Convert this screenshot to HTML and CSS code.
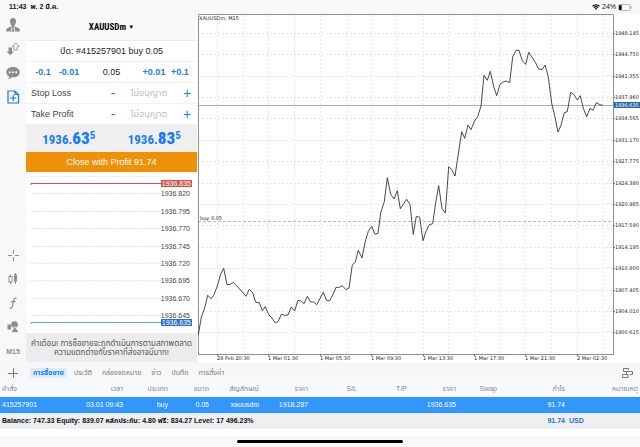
FILE: index.html
```html
<!DOCTYPE html>
<html lang="th">
<head>
<meta charset="utf-8">
<meta name="viewport" content="width=device-width, initial-scale=1">
<title>XAUUSDm, M15</title>
<link rel="stylesheet" href="styles.css">
</head>
<body>
<header class="status">
  <span class="clock">11:43</span><span>พ. 2 มี.ค.</span>
  <span class="status-right">
    <svg width="8" height="6" viewBox="0 0 16 12" aria-hidden="true"><path d="M1 4.500a10 10 0 0 1 14 0M3.600 7.200a6.300 6.300 0 0 1 8.800 0" fill="none" stroke="#111" stroke-width="2.400"/><path d="M5.400 9 8 12l2.600-3a4 4 0 0 0-5.200 0z" fill="#111"/></svg>
    <span>24%</span>
    <svg width="14" height="7" viewBox="0 0 14 7" aria-hidden="true"><rect x=".5" y=".5" width="11.500" height="6" rx="1.500" fill="#fff" stroke="#999" stroke-width=".7"/><rect x="1" y="1" width="2.700" height="5" rx=".8" fill="#111"/><path d="M13 2.300v2.400" stroke="#999"/></svg>
  </span>
</header>

<main class="work">
  <nav class="tools">
    <button aria-label="Account"><svg width="14" height="14" viewBox="0 0 14 14" fill="#8d8d8d"><path d="M7 0C4.800 0 3.800 1.500 4 3.600c.1 1.700.8 3 1.600 3.800v1.200L1.500 10Q.2 10.600.2 12v1.600h13.600V12q0-1.400-1.300-2L8.400 8.600V7.400c.8-.8 1.500-2.100 1.600-3.800C10.200 1.500 9.200 0 7 0z"/><path d="m5.400 9 1.600 1.200L8.600 9l.7 4.600H4.700z" fill="#e4e4e4"/><path d="m6.300 10.400h1.400l.5 3.200H5.800z"/></svg></button>
    <button aria-label="Quotes"><svg width="14" height="14" viewBox="0 0 14 14"><path d="M2.500 5.500h3.500v4h2L4.300 13.300.5 9.500h2z" fill="#8d8d8d"/><path d="M9.700.8 13 4.500h-1.700V8H8V4.500H6.400z" fill="#f8f8f8" stroke="#8d8d8d" stroke-width=".8"/></svg></button>
    <button aria-label="Chat"><svg width="14" height="14" viewBox="0 0 14 14"><path d="M7 1C3 1 .3 3.200.3 6.200c0 2 1.200 3.600 3 4.400-.2 1-.8 1.900-1.500 2.500 1.700-.1 3-.8 4-1.900H7c4 0 6.700-2 6.700-5S11 1 7 1z" fill="#8d8d8d"/><g fill="#f8f8f8"><circle cx="3.800" cy="6.200" r="1"/><circle cx="7" cy="6.200" r="1"/><circle cx="10.200" cy="6.200" r="1"/></g></svg></button>
    <button aria-label="New order"><svg width="14" height="14" viewBox="0 0 14 14" fill="none" stroke="#1678e6" stroke-width="1.200"><path d="M2 1h7l3.500 3.500V13H2zM9 1v3.500h3.500M7.200 5v6M4.200 8h6"/></svg></button>
    <span class="tools-gap"></span>
    <button aria-label="Crosshair"><svg width="14" height="14" viewBox="0 0 14 14" stroke="#8d8d8d"><path d="M7.500 2v4M7.500 9v4M2 7.500h4M9 7.500h4"/></svg></button>
    <button aria-label="Chart type"><svg width="14" height="14" viewBox="0 0 14 14" stroke="#8d8d8d"><path d="M4.500 2.500v2M4.500 10v2M9.500 1v11" /><rect x="3" y="4.500" width="3" height="5.500" fill="none"/><rect x="8.500" y="3" width="2" height="6" fill="#8d8d8d"/></svg></button>
    <button aria-label="Indicators"><svg width="14" height="14" viewBox="0 0 14 14" fill="none" stroke="#8d8d8d" stroke-width="1.200"><path d="M10.500 2.600C9 1.400 8.200 2.400 7.800 4L6.300 10.500C5.900 12 5 12.600 3.600 11.800M5 5.600h4.600"/></svg></button>
    <button aria-label="Objects"><svg width="14" height="14" viewBox="0 0 14 14" fill="#8d8d8d"><circle cx="8.500" cy="4.500" r="3.300"/><path d="M1.500 4.500h3.600v5H1.500z"/><path d="m8.800 6.500 4.200 6H5z" stroke="#f8f8f8" stroke-width=".7"/></svg></button>
    <button class="timeframe">M15</button>
  </nav>

  <section class="order">
    <h1>XAUUSDm <span class="caret">▼</span></h1>
    <div class="row title">ปิด: #415257901 buy 0.05</div>
    <div class="row volume">
      <button>-0.1</button><button>-0.01</button>
      <input aria-label="Volume" value="0.05">
      <button>+0.01</button><button>+0.1</button>
    </div>
    <div class="row level">
      <label for="sl">Stop Loss</label><button aria-label="Decrease stop loss">-</button>
      <input id="sl" placeholder="ไม่อนุญาต"><button aria-label="Increase stop loss">+</button>
    </div>
    <div class="row level">
      <label for="tp">Take Profit</label><button aria-label="Decrease take profit">-</button>
      <input id="tp" placeholder="ไม่อนุญาต"><button aria-label="Increase take profit">+</button>
    </div>
    <div class="prices">
      <div class="price">1936.<b>63</b><sup>5</sup></div>
      <div class="price">1936.<b>83</b><sup>5</sup></div>
    </div>
    <button class="close">Close with Profit 91.74</button>
    <svg class="depth" viewBox="0 0 171 161">
      <path class="depth-grid" d="M5 4.500H135M5 21.500H135M5 39.500H135M5 56.500H135M5 74.500H135M5 91.500H135M5 108.500H135M5 126.500H135M5 143.500H135"/>
      <path d="M5 13v-1.500H135" fill="none" stroke="#d0524a"/>
      <path d="M5 152v-1.500H135" fill="none" stroke="#6b9fdc"/>
      <g class="depth-label">
        <text x="164" y="24">1936.820</text><text x="164" y="42">1936.795</text><text x="164" y="59">1936.770</text><text x="164" y="77">1936.745</text><text x="164" y="94">1936.720</text><text x="164" y="111">1936.695</text><text x="164" y="129">1936.670</text><text x="164" y="146">1936.645</text>
      </g>
      <rect x="135" y="8" width="31" height="7" fill="#d0524a"/><rect x="135" y="147" width="31" height="7" fill="#2c70c9"/>
      <g class="depth-label on"><text x="165" y="14">1936.835</text><text x="165" y="153">1936.635</text></g>
    </svg>
    <p class="warning">คำเตือน! การซื้อขายจะถูกดำเนินการตามสภาพตลาด ความแตกต่างกับราคาที่ส่งอาจมีมาก!</p>
  </section>

  <section class="chart">
    <svg viewBox="197 14 443 348" role="img" aria-label="XAUUSDm M15">
      <path class="grid" d="M198 33.500H613M198 54.500H613M198 76.500H613M198 97.500H613M198 118.500H613M198 140.500H613M198 161.500H613M198 183.500H613M198 204.500H613M198 225.500H613M198 247.500H613M198 268.500H613M198 290.500H613M198 311.500H613M198 332.500H613"/>
      <path class="grid" d="M217.500 15V354M243.500 15V354M268.500 15V354M294.500 15V354M320.500 15V354M346.500 15V354M371.500 15V354M397.500 15V354M423.500 15V354M448.500 15V354M474.500 15V354M500.500 15V354M525.500 15V354M551.500 15V354M577.500 15V354M602.500 15V354"/>
      <path d="M198 105.500H613" stroke="#9bb5cb"/>
      <path d="M198 221.500H613" stroke="#a3c9b0" stroke-dasharray="3 2"/>
      <path d="M198.500 354.500V14.500H613.500V354.500Z" fill="none" stroke="#8e8e8e"/>
      <path d="M613 33.500h2M613 54.500h2M613 76.500h2M613 97.500h2M613 118.500h2M613 140.500h2M613 161.500h2M613 183.500h2M613 204.500h2M613 225.500h2M613 247.500h2M613 268.500h2M613 290.500h2M613 311.500h2M613 332.500h2M217.500 354v2M268.500 354v2M320.500 354v2M371.500 354v2M423.500 354v2M474.500 354v2M525.500 354v2M577.500 354v2" stroke="#777"/>
      <polyline class="line" points="198.3,334.7 201.3,317.3 204.7,308 207.7,295.3 211,298.7 214,294.7 217.3,286 220.7,274 223.7,268.3 227,284.7 230.3,284.3 233.3,282.3 236.7,286 239.7,289 246,296.3 249.3,289.3 252.7,292.7 255.7,302.3 259.3,302.7 262.3,310.7 265.3,306.7 268.7,314.7 272,318 275.3,323 278.3,321.3 281.3,314.3 284.7,315.3 288,315 291.3,307 294.7,311 297.7,300.7 300.7,300.7 304,303.7 307.3,296.3 310.3,301.7 313.7,302 316.7,304.7 323.3,292.3 326.7,300.7 329.7,300.7 332.7,295 336,287.3 339.3,287.3 342.3,285.7 346,289.7 349,288 352.3,265 355.3,262 358.3,250.3 362,258 365.3,241.3 368.3,231.3 371.7,226.3 375,234.3 378,233.3 380.7,212.7 384.3,201.7 387.3,177.7 390.7,194.3 394,199 397.3,190.7 400.3,208.7 406.7,199.3 410,204.7 413.3,234.3 416.3,216.3 419.7,217.3 423,240.7 426,231.3 429.3,224.7 432.7,223.7 435.7,202.7 438.7,185.7 442,208.7 445.3,213 448.7,166.7 451.7,169.7 455,176 458.3,154 461.7,131.7 464.7,138.3 468,125 471,129.7 474.7,120.7 477.7,116.7 481,106 484,75.3 487.3,80.3 490.3,71.3 493.7,86.7 496.7,95.7 500,84.3 503,82 506.3,81 509.7,82.7 512.7,56.7 516,50.3 519,50.3 522.3,60.7 525.7,64.3 528.7,52.3 535.3,62.3 538.7,69 542,69.7 545,65 548.3,76.7 551.7,103.3 554.7,115.7 558,132 561,125.3 564.3,112.7 567.3,111.7 570.7,92.3 573.7,94.3 577.3,100 580.3,95.7 583.3,108.3 586.7,116.7 590,108.3 593,110.3 596.3,102.7 599.7,104.7 602.7,105.3"/>
      <rect x="614" y="102" width="26" height="6" fill="#2c67a5"/>
      <g class="tick">
        <text x="199" y="20">XAUUSDm, M15</text><text x="200" y="220">buy 0.05</text>
        <text x="615" y="35">1948.145</text><text x="615" y="56">1944.750</text><text x="615" y="78">1941.355</text><text x="615" y="99">1937.960</text><text x="615" y="120">1934.565</text><text x="615" y="142">1931.170</text><text x="615" y="163">1927.775</text><text x="615" y="185">1924.380</text><text x="615" y="206">1920.985</text><text x="615" y="227">1917.590</text><text x="615" y="249">1914.195</text><text x="615" y="270">1910.800</text><text x="615" y="292">1907.405</text><text x="615" y="313">1904.010</text><text x="615" y="334">1900.615</text>
        <text x="217" y="360">28 Feb 20:30</text><text x="268" y="360">1 Mar 01:30</text><text x="320" y="360">1 Mar 05:30</text><text x="371" y="360">1 Mar 09:30</text><text x="423" y="360">1 Mar 13:30</text><text x="474" y="360">1 Mar 17:30</text><text x="525" y="360">1 Mar 21:30</text><text x="577" y="360">2 Mar 02:30</text>
        <text x="615" y="107" fill="#fff">1936.635</text>
      </g>
    </svg>
  </section>
</main>

<nav class="tabs">
  <button class="add" aria-label="Add"><svg width="10" height="10" viewBox="0 0 10 10" stroke="#777"><path d="M5.500 0v10M0 5.500h10"/></svg></button>
  <button class="tab active">การซื้อขาย</button><button class="tab">ประวัติ</button><button class="tab">กล่องจดหมาย</button><button class="tab">ข่าว</button><button class="tab">บันทึก</button><button class="tab">การตั้งค่า</button>
  <button class="layout" aria-label="Layout"><svg width="12" height="12" viewBox="0 0 12 12" fill="none" stroke="#777"><path d="M4.500 4.500h-3v-3h5v1.500M.5 7.500h5.500v3H.5zM4.500 4.500v3M4.500 4.500h6v3H8"/></svg></button>
</nav>

<table class="trades">
  <colgroup><col class="w70"><col class="w55"><col class="w45"><col class="w41"><col class="w50"><col class="w49"><col class="w49"><col class="w50"><col class="w49"><col class="w41"><col class="w68"><col class="w73"></colgroup>
  <thead><tr><th>คำสั่ง</th><th>เวลา</th><th>ประเภท</th><th>ขนาด</th><th>สัญลักษณ์</th><th>ราคา</th><th>S/L</th><th>T/P</th><th>ราคา</th><th>Swap</th><th>กำไร</th><th>หมายเหตุ</th></tr></thead>
  <tbody><tr><td>415257901</td><td>03.01 09:43</td><td>buy</td><td>0.05</td><td>xauusdm</td><td>1918.287</td><td></td><td></td><td>1936.635</td><td></td><td>91.74</td><td></td></tr></tbody>
  <tfoot><tr><td colspan="10">Balance: 747.33 Equity: 839.07 หลักประกัน: 4.80 ฟรี: 834.27 Level: 17 496.23%</td><td class="total">91.74</td><td class="total currency">USD</td></tr></tfoot>
</table>
<footer class="home"><span class="bar"></span></footer>
</body>
</html>
```
FILE: styles.css
```css
* { box-sizing: border-box; }
body {
  margin: 0;
  min-height: 100vh;
  display: flex;
  flex-direction: column;
  background: #fff;
  color: #222;
  font-family: "Liberation Sans", "Noto Sans Thai", sans-serif;
  font-size: 9px;
}
button, input {
  border: 0;
  padding: 0;
  margin: 0;
  background: none;
  font: inherit;
  color: inherit;
  min-width: 0;
}
svg { display: block; }

.status {
  display: flex;
  align-items: center;
  gap: 4px;
  height: 14px;
  padding: 0 8px 0 9px;
  background: #f8f8f8;
  color: #111;
  font-size: 7px;
  font-weight: bold;
  line-height: 14px;
}
.status-right { display: flex; align-items: center; gap: 2px; margin-left: auto; font-weight: normal; }

.work { display: flex; background: #f8f8f8; }
.tools {
  flex: 0 0 26px;
  display: flex;
  flex-direction: column;
  align-items: center;
  gap: 10px;
  padding: 4px 0 4px;
}
.tools button { height: 14px; }
.tools-gap { flex: 1; }
.tools .timeframe { color: #8d8d8d; font-size: 7px; font-weight: bold; }

.order { flex: 0 0 171px; display: flex; flex-direction: column; background: #fff; }
.order h1 {
  margin: 0;
  height: 27px;
  text-align: center;
  background: #fafafa;
  border-bottom: 1px solid #ececec;
  color: #000;
  font: bold 9px/26px "Liberation Sans Narrow", "Roboto Condensed", Roboto, sans-serif;
}
.caret { font-size: 6px; vertical-align: 1px; }
.row { height: 21px; border-bottom: 1px solid #f2f2f2; line-height: 20px; }
.title { text-align: center; }
.volume {
  display: grid;
  grid-template-columns: 22px 24px 1fr 24px 22px;
  gap: 3px;
  padding: 0 6px;
}
.volume button { color: #1a7cf0; font-weight: bold; }
.volume input { width: 100%; text-align: center; }
.level {
  display: grid;
  grid-template-columns: 1fr 8px 64px 12px;
  padding: 0 4px 0 5px;
  color: #444;
}
.level button { color: #1a7cf0; font-size: 14px; line-height: 18px; }
.level input { text-align: center; }
.level input::placeholder { color: #bbb; opacity: 1; }
.prices {
  display: grid;
  grid-template-columns: 1fr 1fr;
  height: 27px;
  background: #efefef;
}
.price {
  text-align: center;
  color: #1a7cf0;
  font: bold 13px/27px "Liberation Sans Narrow", "Roboto Condensed", Roboto, sans-serif;
}
.price b { font-size: 17px; }
.price sup { font-size: 11px; line-height: 1px; vertical-align: 5px; }
.close { height: 20px; background: #ef9108; color: #fff; }
.depth { width: 100%; }
.depth-grid { stroke: #e6e6e6; stroke-dasharray: 2 1; }
.depth-label { font-size: 7px; fill: #444; text-anchor: end; }
.depth-label.on { fill: #fff; }
.warning {
  margin: 0;
  flex: 1;
  padding: 6px 4px 3px;
  background: #ececee;
  color: #555;
  font-size: 8px;
  line-height: 9px;
  text-align: center;
}

.chart { flex: 1; min-width: 0; background: #fff; }
.chart svg { width: 100%; }
.grid { stroke: #e6e6e6; stroke-dasharray: 2 2; }
.line { fill: none; stroke: #333; stroke-width: 0.9; stroke-linejoin: round; }
.tick { font-family: "DejaVu Sans", sans-serif; font-size: 5px; fill: #222; }

.tabs {
  display: flex;
  align-items: center;
  gap: 4px;
  height: 19px;
  padding: 2px 6px 0 8px;
  background: #f7f7f7;
  color: #777;
  font-size: 7px;
}
.add { margin-right: 8px; }
.tab { padding: 0 3px; height: 10px; line-height: 10px; border-radius: 2px; }
.tab.active { background: #dcebfb; color: #1a7cf0; font-weight: bold; }
.layout { margin-left: auto; }

.trades {
  width: 100%;
  table-layout: fixed;
  border-collapse: collapse;
  font-size: 7px;
  line-height: 8px;
}
.trades th, .trades td { height: 16px; padding: 0 2px; text-align: right; white-space: nowrap; font-weight: normal; }
.trades th:first-child, .trades td:first-child { text-align: left; }
.trades thead { background: #f6faff; color: #888; }
.trades tbody { background: #3396fb; color: #fff; }
.trades tfoot { background: #eeeff1; color: #111; }
.trades tfoot td { font-weight: bold; }
.trades .total { color: #1f73cf; }
.trades .currency { text-align: left; }
.w70 { width: 70px; }
.w55 { width: 55px; }
.w45 { width: 45px; }
.w41 { width: 41px; }
.w50 { width: 50px; }
.w49 { width: 49px; }
.w68 { width: 68px; }
.w73 { width: 73px; }

.home { margin-top: auto; height: 11px; padding-top: 4px; background: #f8f8f8; }
.bar { display: block; width: 26%; height: 3px; margin: 0 auto; border-radius: 2px; background: #000; }
```
